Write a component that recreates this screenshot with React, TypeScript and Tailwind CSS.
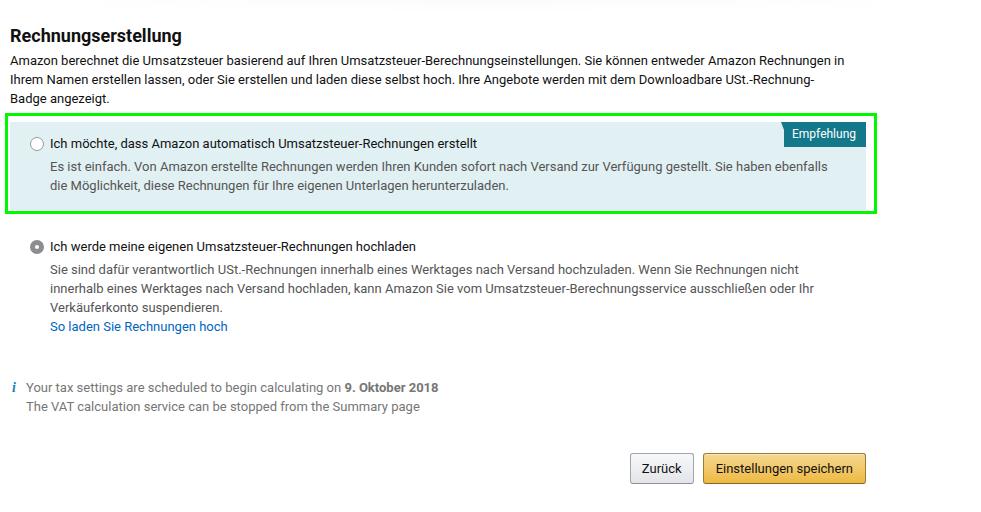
import type { ReactNode } from "react";

type OptionProps = {
  id: string;
  label: string;
  defaultChecked?: boolean;
  children: ReactNode;
};

function InvoiceOption({ id, label, defaultChecked, children }: OptionProps) {
  return (
    <div className="flex gap-[6px] pl-5">
      <input
        id={id}
        type="radio"
        name="invoicing"
        defaultChecked={defaultChecked}
        className="mt-[3px] size-[14px] shrink-0 appearance-none rounded-full border border-[#9a9a9a] bg-white checked:border-[5px] checked:border-[#8c8c91]"
      />
      <div className="min-w-0">
        <label htmlFor={id} className="block text-[#111111]">
          {label}
        </label>
        <div className="mt-1 text-[#555555]">{children}</div>
      </div>
    </div>
  );
}

export default function App() {
  return (
    <div className="bg-white font-[Roboto,'Open_Sans',sans-serif] text-[13px] leading-[19px] text-[#111111]">
      <div className="h-3 bg-[radial-gradient(ellipse_at_top,#fbfbfb,#ffffff_70%)]" />
      <main className="ml-[5px] max-w-[872px] pt-3">
        <header className="pr-[11px] pl-[5px]">
          <h1 id="invoicing-title" className="text-[18px] leading-6 font-bold">
            Rechnungserstellung
          </h1>
          <p className="mt-[3px]">
            Amazon berechnet die Umsatzsteuer basierend auf Ihren Umsatzsteuer-Berechnungseinstellungen. Sie können
            entweder Amazon Rechnungen in
            <br />
            Ihrem Namen erstellen lassen, oder Sie erstellen und laden diese selbst hoch. Ihre Angebote werden mit dem
            Downloadbare USt.-Rechnung-
            <br />
            Badge angezeigt.
          </p>
        </header>

        <fieldset aria-labelledby="invoicing-title">
          <section className="mt-[5px] border-[3px] border-[#00f900] pt-[6px] pr-2 pb-px pl-[2px]">
            <div className="relative bg-[#e1f0f3] pt-3 pb-[15px]">
              <span className="absolute top-0 right-0 bg-[#12788a] py-[3px] pr-[10px] pl-[11px] text-[12px] text-white [clip-path:polygon(0_0,100%_0,100%_100%,3px_100%,3px_32%)]">
                Empfehlung
              </span>
              <InvoiceOption id="auto" label="Ich möchte, dass Amazon automatisch Umsatzsteuer-Rechnungen erstellt">
                Es ist einfach. Von Amazon erstellte Rechnungen werden Ihren Kunden sofort nach Versand zur Verfügung
                gestellt. Sie haben ebenfalls
                <br />
                die Möglichkeit, diese Rechnungen für Ihre eigenen Unterlagen herunterzuladen.
              </InvoiceOption>
            </div>
          </section>

          <section className="mt-[23px] pl-[5px]">
            <InvoiceOption id="own" label="Ich werde meine eigenen Umsatzsteuer-Rechnungen hochladen" defaultChecked>
              Sie sind dafür verantwortlich USt.-Rechnungen innerhalb eines Werktages nach Versand hochzuladen. Wenn Sie
              Rechnungen nicht
              <br />
              innerhalb eines Werktages nach Versand hochladen, kann Amazon Sie vom Umsatzsteuer-Berechnungsservice
              ausschließen oder Ihr
              <br />
              Verkäuferkonto suspendieren.
              <br />
              <a href="#upload" className="text-[#0066c0]">
                So laden Sie Rechnungen hoch
              </a>
            </InvoiceOption>
          </section>
        </fieldset>

        <div className="mt-[42px] flex pl-[5px] text-[#767676]">
          <span
            aria-hidden="true"
            className="w-4 pl-[2px] font-['Liberation_Serif',serif] text-[14px] font-bold text-[#1a7fb0] italic"
          >
            i
          </span>
          <p>
            Your tax settings are scheduled to begin calculating on <strong>9. Oktober 2018</strong>
            <br />
            The VAT calculation service can be stopped from the Summary page
          </p>
        </div>

        <div className="mt-[37px] flex justify-end gap-[9px] pr-[11px]">
          <button
            type="button"
            className="h-[31px] rounded-[3px] border border-[#a2a6ac] border-b-[#8d9096] bg-linear-to-b from-[#f7f8fa] to-[#e3e5e9] px-[11px]"
          >
            Zurück
          </button>
          <button
            type="button"
            className="h-[31px] rounded-[3px] border border-[#9c7e31] border-b-[#846a29] bg-linear-to-b from-[#f5d78e] to-[#eeb93f] px-3 shadow-[inset_0_1px_0_rgba(255,255,255,0.4)]"
          >
            Einstellungen speichern
          </button>
        </div>
      </main>
    </div>
  );
}
